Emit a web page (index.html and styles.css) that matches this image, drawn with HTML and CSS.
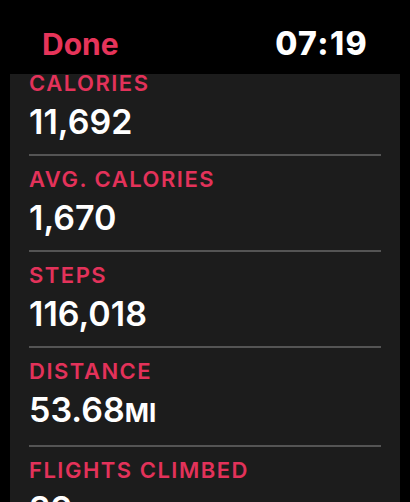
FILE: index.html
```html
<!DOCTYPE html>
<html lang="en">
<head>
<meta charset="utf-8">
<title>Workout Summary</title>
<link rel="stylesheet" href="styles.css">
</head>
<body>
<div class="screen">
  <header class="topbar">
    <span class="done">Done</span>
    <span class="clock">07:19</span>
  </header>
  <section class="panel">
    <ul class="stats">
      <li class="stat">
        <div class="label">CALORIES</div>
        <div class="value">11,692</div>
      </li>
      <li class="stat">
        <div class="label">AVG. CALORIES</div>
        <div class="value">1,670</div>
      </li>
      <li class="stat">
        <div class="label">STEPS</div>
        <div class="value">116,018</div>
      </li>
      <li class="stat">
        <div class="label">DISTANCE</div>
        <div class="value">53.68<span class="unit">MI</span></div>
      </li>
      <li class="stat">
        <div class="label">FLIGHTS CLIMBED</div>
        <div class="value">39</div>
      </li>
    </ul>
  </section>
</div>
</body>
</html>
```
FILE: styles.css
```css
html, body {
  margin: 0;
  padding: 0;
  background: #000;
}

body {
  width: 410px;
  height: 502px;
  overflow: hidden;
  font-family: Inter, "Noto Sans", "DejaVu Sans", sans-serif;
  color: #fff;
}

.screen {
  display: flex;
  flex-direction: column;
  height: 502px;
}

.topbar {
  height: 74px;
  box-sizing: border-box;
  padding: 26px 42px 0 42px;
  display: flex;
  justify-content: space-between;
  align-items: baseline;
  flex: none;
}

.done {
  color: #e6345a;
  font-size: 30px;
  line-height: 36px;
  font-weight: 700;
}

.clock {
  color: #fff;
  font-size: 32px;
  line-height: 36px;
  font-weight: 800;
  letter-spacing: 1.4px;
}

.panel {
  flex: 1;
  margin: 0 10px;
  background: #1c1c1c;
  overflow: hidden;
}

.stats {
  list-style: none;
  margin: -16px 0 0;
  padding: 0;
}

.stat {
  margin: 0 19px;
  border-top: 2px solid #545454;
  padding: 11px 0 12px;
  display: flex;
  flex-direction: column;
  gap: 7px;
}

.label {
  color: #e3325a;
  font-size: 22px;
  line-height: 24px;
  font-weight: 600;
  letter-spacing: 1.5px;
}

.value {
  font-size: 34px;
  line-height: 40px;
  font-weight: 600;
}

.unit {
  font-size: 26px;
  font-weight: 700;
}
```
